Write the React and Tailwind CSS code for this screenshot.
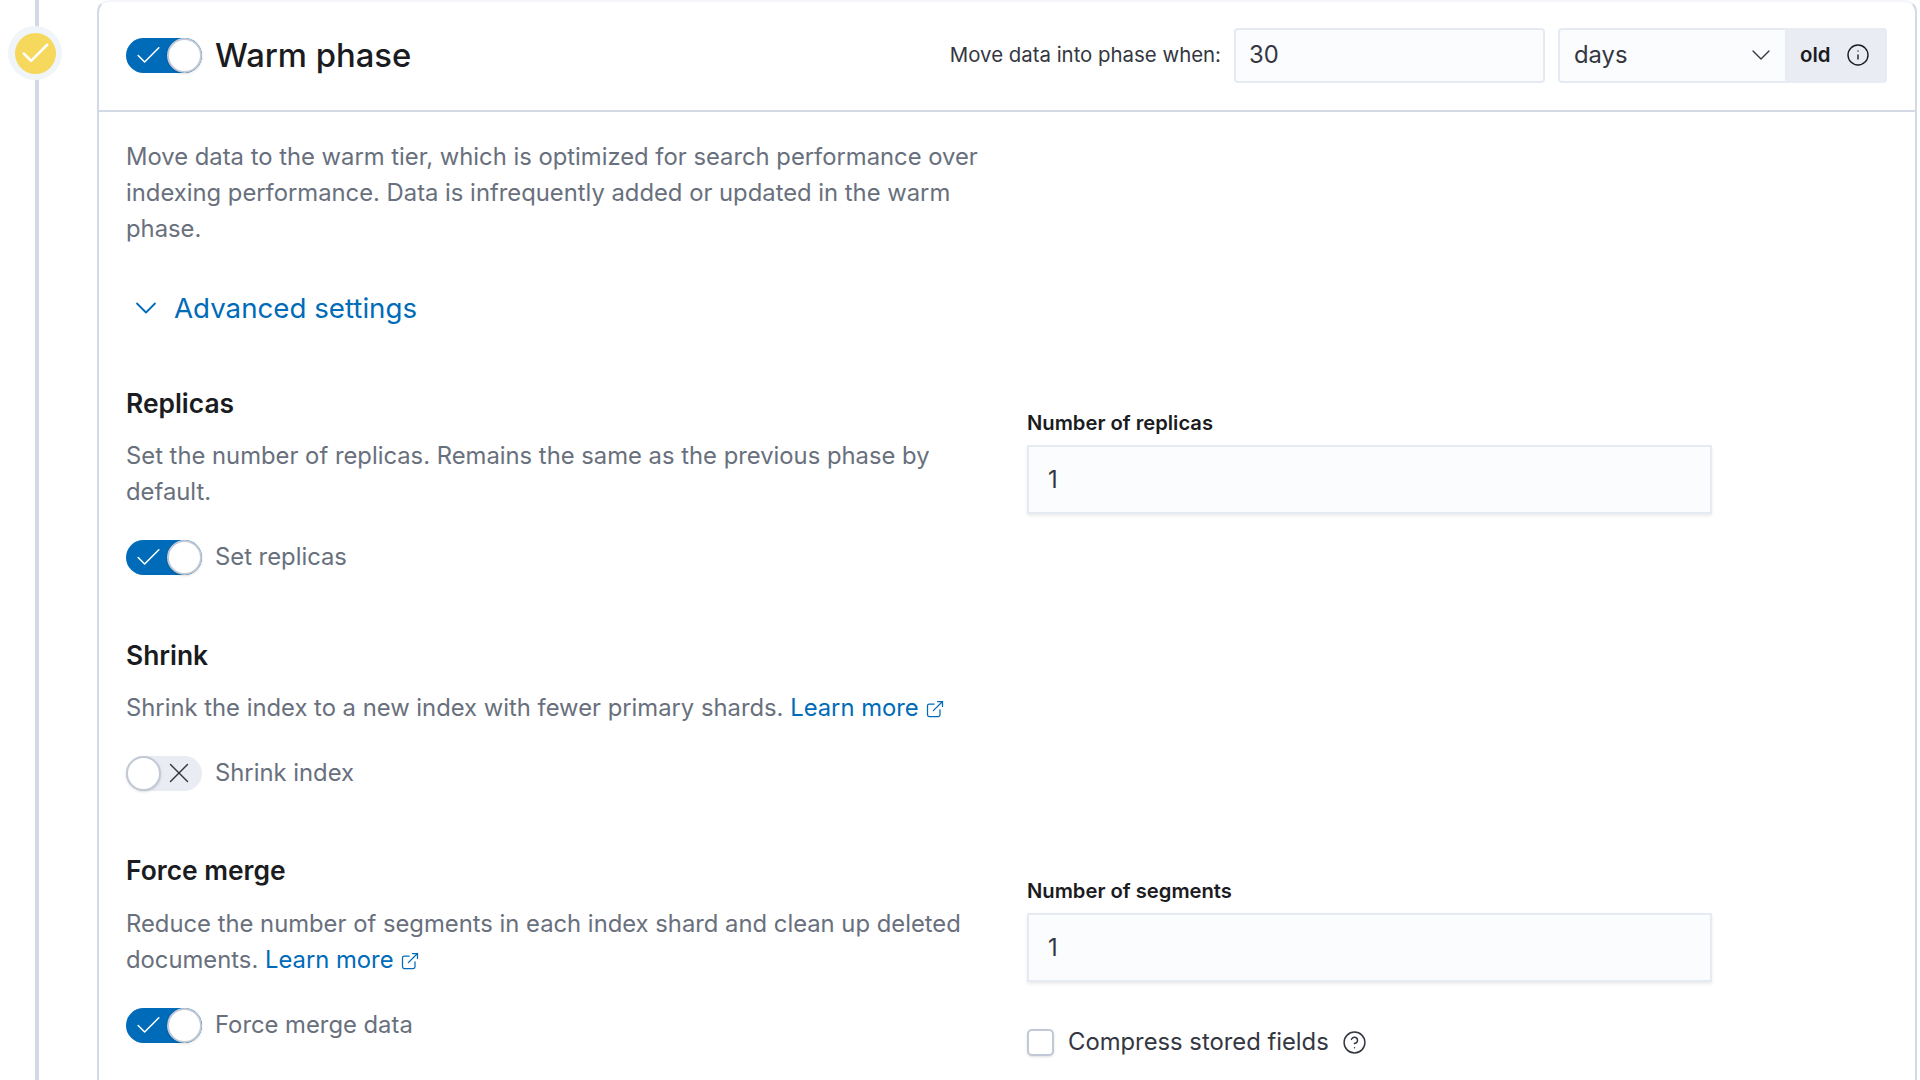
import React from "react";
import { Check, X, ChevronDown, Info, ExternalLink, CircleHelp } from "lucide-react";

// Toggle used for phase and for each setting
const Toggle = ({ on = true }) => {
  if (on) {
    return (
      <div className="flex h-[35px] w-[76px] shrink-0 items-center justify-between rounded-full bg-[#006bb8] pl-[7px]">
        <Check className="h-[31px] w-[31px] text-white" strokeWidth={1.2} />
        <div className="h-[35px] w-[35px] rounded-full border-2 border-[#c2c9d6] bg-white shadow-sm" />
      </div>
    );
  }
  return (
    <div className="flex h-[35px] w-[76px] shrink-0 items-center justify-between rounded-full bg-[#e9edf3] pr-[6px]">
      <div className="h-[35px] w-[35px] rounded-full border-2 border-[#c2c9d6] bg-white shadow-sm" />
      <X className="h-[34px] w-[34px] text-[#343741]" strokeWidth={1} />
    </div>
  );
};

const LearnMore = () => (
  <span className="text-[#006bb8]">
    Learn more
    <ExternalLink className="ml-[6px] inline h-[20px] w-[20px] align-[-3px]" strokeWidth={1.5} />
  </span>
);

const NumberField = ({ label }) => (
  <div>
    <p className="mb-[9px] text-[20.2px] leading-[26px] font-semibold text-[#1a1c21]">{label}</p>
    <div className="flex h-[69px] w-[685px] items-center border-2 border-[#e6ebf3] bg-[#fbfcfd] pl-[19px] text-[23.8px] text-[#343741] shadow-[0_2px_3px_rgba(0,0,0,0.08)]">
      1
    </div>
  </div>
);

const App = () => {
  return (
    <div className="flex h-[1080px] w-[1920px] overflow-hidden bg-white font-['Inter',sans-serif] text-[23.8px] leading-[36px] text-[#69707d]">
      {/* Timeline */}
      <div className="relative w-[97px] shrink-0">
        <div className="ml-[35px] h-full w-[4px] bg-[#d3dae6]" />
        <div className="absolute top-[26px] left-[8px] flex h-[54px] w-[54px] items-center justify-center rounded-full bg-[#f0f5f9]">
          <div className="flex h-[41px] w-[41px] items-center justify-center rounded-full bg-[#f5d85c]">
            <Check className="h-[35px] w-[35px] text-white" strokeWidth={1.7} />
          </div>
        </div>
      </div>

      {/* Phase card */}
      <div className="h-[1200px] w-[1820px] rounded-t-xl border-2 border-[#d3dae6] border-t-[#f4f6fa]">
        <div className="flex h-[110px] items-center justify-between border-b-2 border-[#d3dae6] pr-[28px] pb-[2px] pl-[27px]">
          <div className="flex items-center gap-[13px]">
            <Toggle />
            <h2 className="text-[32.8px] leading-[42px] font-medium text-[#1a1c21]">Warm phase</h2>
          </div>
          <div className="flex items-center">
            <span className="mr-[13px] text-[20.4px] text-[#343741]">Move data into phase when:</span>
            <div className="flex h-[55px] w-[311px] items-center rounded-[4px] border-2 border-[#e6ebf3] bg-[#fbfcfd] pl-[13px] text-[#343741]">
              30
            </div>
            <div className="ml-[13px] flex h-[55px] w-[329px] items-center rounded-[4px] border-2 border-[#e6ebf3] bg-[#fbfcfd]">
              <div className="flex flex-1 items-center justify-between pr-[8px] pl-[14px] text-[#343741]">
                <span>days</span>
                <div className="-my-[6px]">
                  <ChevronDown className="h-[32px] w-[32px]" strokeWidth={1} />
                </div>
              </div>
              <div className="flex h-[55px] w-[100px] items-center justify-between bg-[#e9edf3] pr-[15px] pl-[15px] text-[20.4px] font-semibold text-[#1a1c21]">
                <span>old</span>
                <Info className="h-[24px] w-[24px]" strokeWidth={1.4} />
              </div>
            </div>
          </div>
        </div>

        <div className="pt-[27px] pl-[27px]">
          <p className="w-[880px]">
            Move data to the warm tier, which is optimized for search performance over indexing performance. Data is infrequently added or updated in the warm phase.
          </p>
          <div className="mt-[43px] flex items-center gap-[10px] pl-[2px] text-[#006bb8]">
            <ChevronDown className="h-[36px] w-[36px]" strokeWidth={1.2} />
            <span className="text-[27.7px] leading-[36px]">Advanced settings</span>
          </div>

          {/* Replicas */}
          <div className="mt-[57px] grid grid-cols-[901px_1fr]">
            <div>
              <h3 className="text-[26.4px] leading-[40px] font-semibold text-[#1a1c21]">Replicas</h3>
              <p className="mt-[15px] w-[860px]">
                Set the number of replicas. Remains the same as the previous phase by default.
              </p>
              <div className="mt-[29px] flex items-center gap-[13px]">
                <Toggle />
                <span>Set replicas</span>
              </div>
            </div>
            <div className="pt-[27px]">
              <NumberField label="Number of replicas" />
            </div>
          </div>

          {/* Shrink */}
          <div className="mt-[60px]">
            <h3 className="text-[26.4px] leading-[40px] font-semibold text-[#1a1c21]">Shrink</h3>
            <p className="mt-[15px]">
              Shrink the index to a new index with fewer primary shards. <LearnMore />
            </p>
            <div className="mt-[29px] flex items-center gap-[13px]">
              <Toggle on={false} />
              <span>Shrink index</span>
            </div>
          </div>

          {/* Force merge */}
          <div className="mt-[59px] grid grid-cols-[901px_1fr]">
            <div>
              <h3 className="text-[26.4px] leading-[40px] font-semibold text-[#1a1c21]">Force merge</h3>
              <p className="mt-[16px] w-[860px]">
                Reduce the number of segments in each index shard and clean up deleted documents. <LearnMore />
              </p>
              <div className="mt-[29px] flex items-center gap-[13px]">
                <Toggle />
                <span>Force merge data</span>
              </div>
            </div>
            <div className="pt-[28px]">
              <NumberField label="Number of segments" />
              <div className="mt-[42px] flex items-center text-[#343741]">
                <div className="h-[27px] w-[27px] rounded-[5px] border-2 border-[#c2c9d6] bg-white shadow-sm" />
                <span className="ml-[14px]">Compress stored fields</span>
                <CircleHelp className="ml-[13px] h-[25px] w-[25px]" strokeWidth={1.4} />
              </div>
            </div>
          </div>
        </div>
      </div>
    </div>
  );
};

export default App;
